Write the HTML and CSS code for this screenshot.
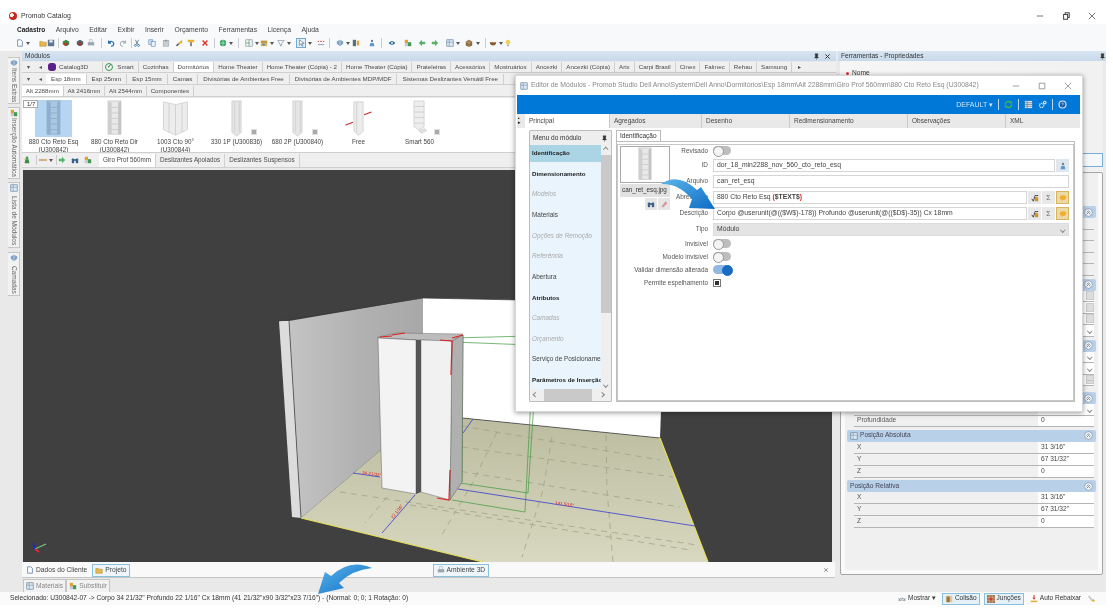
FILE: index.html
```html
<!DOCTYPE html>
<html lang="pt">
<head>
<meta charset="utf-8">
<title>Promob Catalog</title>
<link rel="stylesheet" href="styles.css">
</head>
<body>
<svg class="defs" aria-hidden="true">
  <defs>
    <symbol id="doc" viewBox="0 0 10 10"><path d="M2 1h4l2 2v6H2z" fill="#fff" stroke="#5a7fa8"/></symbol>
    <symbol id="open" viewBox="0 0 10 10"><path d="M1 3h3l1 1h4v5H1z" fill="#e8b84a" stroke="#a97f20" stroke-width=".6"/></symbol>
    <symbol id="save" viewBox="0 0 10 10"><rect x="1" y="1" width="8" height="8" fill="#5b7696"/><rect x="3" y="1.5" width="4" height="3" fill="#e6edf5"/></symbol>
    <symbol id="cube-g" viewBox="0 0 10 10"><path d="M1 3l4-2 4 2v4l-4 2-4-2z" fill="#3f8a45"/><path d="M2 5h5v3H3z" fill="#b03a30"/></symbol>
    <symbol id="cube-d" viewBox="0 0 10 10"><path d="M1 3l4-2 4 2v4l-4 2-4-2z" fill="#55606a"/><path d="M3 5h4v3H3z" fill="#a33"/></symbol>
    <symbol id="print" viewBox="0 0 10 10"><rect x="1" y="4" width="8" height="4" fill="#9aa5ae"/><rect x="3" y="1" width="4" height="3" fill="#eef1f4" stroke="#8a98a5" stroke-width=".5"/></symbol>
    <symbol id="undo" viewBox="0 0 10 10"><path d="M2 2v3h3M2.5 5A3 3 0 1 1 5 9" fill="none" stroke="#2a6eb4" stroke-width="1.6"/></symbol>
    <symbol id="redo" viewBox="0 0 10 10"><path d="M8 2v3H5M7.5 5A3 3 0 1 0 5 9" fill="none" stroke="#a5aeb6" stroke-width="1.4"/></symbol>
    <symbol id="cut" viewBox="0 0 10 10"><path d="M3 1l3 6M7 1L4 7" stroke="#5a6d80" stroke-width="1"/><circle cx="3" cy="8" r="1.2" fill="none" stroke="#3c6fa8"/><circle cx="7" cy="8" r="1.2" fill="none" stroke="#3c6fa8"/></symbol>
    <symbol id="copy" viewBox="0 0 10 10"><rect x="1" y="1" width="5" height="6" fill="#cfe3f5" stroke="#4d82b8" stroke-width=".7"/><rect x="4" y="3" width="5" height="6" fill="#e9f3fb" stroke="#4d82b8" stroke-width=".7"/></symbol>
    <symbol id="paste" viewBox="0 0 10 10"><rect x="1.5" y="2" width="7" height="7" fill="#c9ced3" stroke="#8d969e" stroke-width=".6"/><rect x="3.5" y="1" width="3" height="2" fill="#8d969e"/></symbol>
    <symbol id="brush" viewBox="0 0 10 10"><path d="M9 1L4 5l1 2 4-2z" fill="#e8b32d"/><path d="M1 8l3-3 1 2-2 2z" fill="#56616c"/></symbol>
    <symbol id="paint" viewBox="0 0 10 10"><rect x="1" y="1" width="8" height="3" fill="#efb02e"/><rect x="4" y="4" width="2" height="5" fill="#6d6d6d"/></symbol>
    <symbol id="del" viewBox="0 0 10 10"><path d="M2 2l6 6M8 2L2 8" stroke="#e0352b" stroke-width="1.8"/></symbol>
    <symbol id="globe" viewBox="0 0 10 10"><circle cx="5" cy="5" r="4" fill="#33a35e"/><path d="M1.5 5h7M5 1v8" stroke="#d3f0de" stroke-width=".8"/></symbol>
    <symbol id="plan" viewBox="0 0 10 10"><rect x="1" y="1" width="8" height="8" fill="#f0f3f5" stroke="#6e8294" stroke-width=".7"/><path d="M1 5h5M5 1v8" stroke="#3f8a45" stroke-width=".7"/></symbol>
    <symbol id="wall" viewBox="0 0 10 10"><rect x="1" y="2" width="8" height="3" fill="#c69a3c"/><rect x="1" y="5" width="8" height="4" fill="#d9b765"/><rect x="3" y="6" width="3" height="2" fill="#4c87c0"/></symbol>
    <symbol id="shape" viewBox="0 0 10 10"><path d="M1 2h8L6 5l-1 4-2-4z" fill="#fff" stroke="#5c7086" stroke-width=".7"/></symbol>
    <symbol id="sel" viewBox="0 0 10 10"><path d="M3 1v7l2-2 1.500 3 1-.5L6 5.500h3z" fill="#fff" stroke="#4a5a6a" stroke-width=".7"/></symbol>
    <symbol id="dims" viewBox="0 0 10 10"><path d="M1 7h8" stroke="#7c8ea0"/><path d="M1 3h1.500M4 3h2M7.500 3H9" stroke="#c0392b" stroke-width="1.200"/></symbol>
    <symbol id="gem" viewBox="0 0 10 10"><path d="M5 1l4 2v3L5 9 1 6V3z" fill="#7fa3c7"/><path d="M5 1v8" stroke="#dfe9f3" stroke-width=".7"/></symbol>
    <symbol id="blocks" viewBox="0 0 10 10"><rect x="1" y="1" width="4" height="8" fill="#55707f"/><rect x="6" y="2" width="3" height="6" fill="#d9a83a"/></symbol>
    <symbol id="figure" viewBox="0 0 10 10"><circle cx="5" cy="2.500" r="1.500" fill="#6d7f8f"/><path d="M2 9l1-4h4l1 4z" fill="#5c97cc"/></symbol>
    <symbol id="eye" viewBox="0 0 10 10"><path d="M1 5c2-3 6-3 8 0-2 3-6 3-8 0z" fill="#27698f"/><circle cx="5" cy="5" r="1.300" fill="#eaf3f9"/></symbol>
    <symbol id="mix" viewBox="0 0 10 10"><rect x="1" y="1" width="4" height="4" fill="#e29f2e"/><rect x="5" y="4" width="4" height="5" fill="#3f9a55"/><rect x="1" y="5" width="4" height="4" fill="#c4c9ce"/></symbol>
    <symbol id="arrow-l" viewBox="0 0 10 10"><path d="M1 5l4-4v2.500h4v3H5V9z" fill="#55b46a"/></symbol>
    <symbol id="arrow-r" viewBox="0 0 10 10"><path d="M9 5L5 1v2.500H1v3h4V9z" fill="#55b46a"/></symbol>
    <symbol id="frame" viewBox="0 0 10 10"><rect x="1" y="1" width="8" height="8" fill="#dce9f4" stroke="#5f7f9c" stroke-width=".8"/><path d="M4 1v8M1 4h8" stroke="#5f7f9c" stroke-width=".6"/></symbol>
    <symbol id="crate" viewBox="0 0 10 10"><path d="M1 3l4-2 4 2v5l-4 2-4-2z" fill="#8a6b3d"/><path d="M5 1v9M1 3l4 2 4-2" stroke="#d9c59e" stroke-width=".6" fill="none"/></symbol>
    <symbol id="bowl" viewBox="0 0 10 10"><path d="M1 4h8c0 3-2 4-4 4s-4-1-4-4z" fill="#8c5a2e"/></symbol>
    <symbol id="bulb" viewBox="0 0 10 10"><circle cx="5" cy="4" r="3" fill="#ecd35a"/><rect x="4" y="7" width="2" height="2" fill="#99a"/></symbol>
    <symbol id="binoc" viewBox="0 0 10 10"><rect x="1" y="3" width="3" height="6" rx="1" fill="#3a5f8c"/><rect x="6" y="3" width="3" height="6" rx="1" fill="#3a5f8c"/><rect x="3" y="4" width="4" height="2" fill="#3a5f8c"/></symbol>
    <symbol id="person" viewBox="0 0 10 10"><circle cx="5" cy="2.500" r="1.800" fill="#4f9b57"/><path d="M2 9l1-5h4l1 5z" fill="#3e8a46"/><path d="M1 3l2 2" stroke="#e2b93b"/></symbol>
    <symbol id="cab" viewBox="0 0 30 40"><path d="M8 1h14v36H8z" fill="#e8e8e8" stroke="#b5b5b5" stroke-width=".6"/><path d="M8 1l4 2v34l-4-0z" fill="#cfcfcf"/><path d="M22 1l-3 2v34l3 0z" fill="#c4c4c4"/><path d="M12 8h7M12 14h7M12 20h7M12 26h7M12 32h7" stroke="#b8b8b8" stroke-width=".6"/></symbol>
    <symbol id="cab-sel" viewBox="0 0 30 40"><path d="M8 1h14v36H8z" fill="#a9c8e4" stroke="#7e9fbe" stroke-width=".6"/><path d="M8 1l4 2v34l-4-0zM22 1l-3 2v34l3 0z" fill="#8db0d0"/><path d="M12 8h7M12 14h7M12 20h7M12 26h7M12 32h7" stroke="#7f9fbc" stroke-width=".6"/></symbol>
    <symbol id="corner" viewBox="0 0 30 40"><path d="M2 2l13 3 13-3v30l-13 6-13-6z" fill="#ececec" stroke="#bdbdbd" stroke-width=".6"/><path d="M15 5v33M8 4v31M22 4v31" stroke="#c9c9c9" stroke-width=".8"/></symbol>
    <symbol id="narrow" viewBox="0 0 30 40"><path d="M10 1h10v34l-5 4-5-4z" fill="#e6e6e6" stroke="#bdbdbd" stroke-width=".6"/><path d="M13 2v33M18 2v33" stroke="#cfcfcf"/></symbol>
    <symbol id="free" viewBox="0 0 30 40"><path d="M10 2h10v32l-5 4-5-4z" fill="#ececec" stroke="#bdbdbd" stroke-width=".6"/><path d="M13 3v32" stroke="#cfcfcf"/><path d="M1 27l8-3M21 16l8-3" stroke="#c72a2a" stroke-width="1.200"/></symbol>
    <symbol id="smart" viewBox="0 0 30 40"><path d="M9 1h11v28l-6 3-5-3z" fill="#eee" stroke="#bdbdbd" stroke-width=".6"/><path d="M9 7h11M9 13h11M9 19h11M9 25h11" stroke="#c2c2c2" stroke-width=".7"/><path d="M14 33l6-2 3 2-6 3z" fill="#e2e2e2" stroke="#bbb" stroke-width=".5"/></symbol>
    <symbol id="fx" viewBox="0 0 10 10"><path d="M1 6l2 3 2-7h4" fill="none" stroke="#333" stroke-width="1.100"/><rect x="5" y="4" width="4" height="5" fill="#d6931c"/></symbol>
    <symbol id="bubble" viewBox="0 0 10 10"><ellipse cx="5" cy="4.500" rx="4" ry="3" fill="#f3ae2c"/><path d="M3 7l0 2 2-2z" fill="#f3ae2c"/></symbol>
    <symbol id="pin" viewBox="0 0 10 10"><path d="M3 1h4v1l-.5 3 1 1v1H2.500V6l1-1L3 2zM5 7v3" fill="#333" stroke="#333" stroke-width=".5"/></symbol>
    <symbol id="up2" viewBox="0 0 10 10"><circle cx="5" cy="5" r="4.300" fill="#f5f8fb" stroke="#6f88a2" stroke-width=".7"/><path d="M3 5l2-2 2 2M3 7l2-2 2 2" fill="none" stroke="#3a4f66" stroke-width=".7"/></symbol>
    <symbol id="refresh" viewBox="0 0 10 10"><path d="M1.500 5a3.500 3.500 0 0 1 6-2.300M8.500 5a3.500 3.500 0 0 1-6 2.300" fill="none" stroke="#44b649" stroke-width="1.500"/><path d="M9 1v3H6zM1 9V6h3z" fill="#44b649"/></symbol>
    <symbol id="sheet" viewBox="0 0 10 10"><rect x="1" y="1" width="8" height="8" fill="#dfe7ee"/><path d="M3.500 1v8M1 3h8M1 5h8M1 7h8" stroke="#546b80" stroke-width=".7"/></symbol>
    <symbol id="gears" viewBox="0 0 10 10"><circle cx="4" cy="6" r="2.300" fill="none" stroke="#d6e5f2" stroke-width="1.400" stroke-dasharray="1.200 .6"/><circle cx="7.500" cy="2.800" r="1.500" fill="none" stroke="#d6e5f2" stroke-width="1.200"/></symbol>
    <symbol id="help" viewBox="0 0 10 10"><circle cx="5" cy="5" r="4.500" fill="#d5e5f3"/><circle cx="5" cy="5" r="3.200" fill="#1f5fa8"/><path d="M4 4.200c.3-1 2-1 2 0 0 .8-1 .8-1 1.600" fill="none" stroke="#dcebf7" stroke-width=".7"/></symbol>
    <symbol id="show" viewBox="0 0 10 10"><path d="M1 7c2-4 6-4 8 0M1 4l1 3 3-1M9 4L8 7 5 6" fill="none" stroke="#5d6d7c" stroke-width=".8"/></symbol>
    <symbol id="door" viewBox="0 0 10 10"><rect x="1" y="1" width="8" height="8" fill="#d9c8a4"/><rect x="2" y="2" width="4" height="7" fill="#a5733a"/></symbol>
    <symbol id="joint" viewBox="0 0 10 10"><rect x="0" y="0" width="10" height="10" fill="#a67b52"/><path d="M0 3.300h10M0 6.600h10M3.300 0v10M6.600 0v10" stroke="#d9c3a5" stroke-width=".6"/><circle cx="5" cy="5" r="2" fill="#e22f2f"/></symbol>
    <symbol id="lower" viewBox="0 0 10 10"><path d="M5 0v4" stroke="#d8382c" stroke-width="1.400"/><path d="M3 3.500h4L5 6z" fill="#d8382c"/><rect x="1" y="7" width="8" height="2" fill="#e2b13a"/></symbol>
    <symbol id="wrench" viewBox="0 0 10 10"><path d="M1 1.500l2-1 5 6-2 2z" fill="#c9cdd1"/><path d="M6 7l2-2 2 2-1.500 2z" fill="#e4b636"/></symbol>
  </defs>
</svg>

<div class="app">
  <header class="titlebar">
    <span class="appicon"></span>
    <span class="apptitle">Promob Catalog</span>
    <span class="wincontrols">
      <svg class="wc" viewBox="0 0 10 10"><path d="M1 5h8" stroke="#555"/></svg>
      <svg class="wc" viewBox="0 0 10 10"><path d="M2 3h5v6H2zM4 3V1h5v6H7" fill="none" stroke="#444" stroke-width="1.300"/></svg>
      <svg class="wc" viewBox="0 0 10 10"><path d="M1 1l8 8M9 1L1 9" stroke="#555"/></svg>
    </span>
  </header>

  <nav class="menubar">
    <b>Cadastro</b><span>Arquivo</span><span>Editar</span><span>Exibir</span><span>Inserir</span><span>Orçamento</span><span>Ferramentas</span><span>Licença</span><span>Ajuda</span>
  </nav>

  <div class="toolbar">
    <svg class="ti ml0"><use href="#doc"/></svg><i class="dr ml2"></i>
    <svg class="ti ml9"><use href="#open"/></svg><svg class="ti"><use href="#save"/></svg><i class="sp ml3"></i>
    <svg class="ti ml3"><use href="#cube-g"/></svg><svg class="ti ml6"><use href="#cube-d"/></svg><svg class="ti ml3"><use href="#print"/></svg><i class="sp ml6"></i>
    <svg class="ti ml5"><use href="#undo"/></svg><svg class="ti ml4"><use href="#redo"/></svg><i class="sp ml4"></i>
    <svg class="ti ml1"><use href="#cut"/></svg><svg class="ti ml7"><use href="#copy"/></svg><svg class="ti ml6"><use href="#paste"/></svg><svg class="ti ml5"><use href="#brush"/></svg><svg class="ti ml4"><use href="#paint"/></svg><svg class="ti ml6"><use href="#del"/></svg><i class="sp ml5"></i>
    <svg class="ti ml4"><use href="#globe"/></svg><i class="dr ml2"></i><i class="sp ml5"></i>
    <svg class="ti ml6"><use href="#plan"/></svg><i class="dr ml2"></i>
    <svg class="ti ml1"><use href="#wall"/></svg><i class="dr ml2"></i>
    <svg class="ti ml3"><use href="#shape"/></svg><i class="dr ml2"></i>
    <svg class="ti ml6 on"><use href="#sel"/></svg><i class="dr ml3"></i>
    <svg class="ti ml5"><use href="#dims"/></svg><i class="sp ml4"></i>
    <svg class="ti ml6"><use href="#gem"/></svg><i class="dr ml2"></i>
    <svg class="ti ml2"><use href="#blocks"/></svg><svg class="ti ml8"><use href="#figure"/></svg><i class="sp ml5"></i>
    <svg class="ti ml6"><use href="#eye"/></svg><svg class="ti ml8"><use href="#mix"/></svg><svg class="ti ml6"><use href="#arrow-l"/></svg><svg class="ti ml5"><use href="#arrow-r"/></svg>
    <svg class="ti ml7"><use href="#frame"/></svg><i class="dr ml2"></i>
    <svg class="ti ml5"><use href="#crate"/></svg><i class="dr ml3"></i><i class="sp ml5"></i>
    <svg class="ti ml3"><use href="#bowl"/></svg><i class="dr ml2"></i>
    <svg class="ti ml1"><use href="#bulb"/></svg>
  </div>

  <div class="workspace">
    <aside class="rail">
      <div class="vtab"><svg class="vi"><use href="#gem"/></svg><span>Itens Extras</span></div>
      <div class="vtab"><svg class="vi"><use href="#mix"/></svg><span>Inserção Automática</span></div>
      <div class="vtab"><svg class="vi"><use href="#frame"/></svg><span>Lista de Módulos</span></div>
      <div class="vtab"><svg class="vi"><use href="#gem"/></svg><span>Camadas</span></div>
    </aside>

    <section class="center">
      <div class="phead"><span>Módulos</span><svg class="hi"><use href="#pin"/></svg><svg class="hx" viewBox="0 0 10 10"><path d="M2 2l6 6M8 2L2 8" stroke="#333" stroke-width="1.400"/></svg></div>

      <div class="tabrow r1">
        <span class="nav">▾</span><span class="nav">◂</span>
        <span class="tab cat"><span class="hexi"></span>Catalog3D</span>
        <span class="tab smart"><span class="check">✓</span>Smart</span>
        <span class="tab">Cozinhas</span>
        <span class="tab active">Dormitórios</span>
        <span class="tab">Home Theater</span>
        <span class="tab">Home Theater (Cópia) - 2</span>
        <span class="tab">Home Theater (Cópia)</span>
        <span class="tab">Prateleiras</span>
        <span class="tab">Acessórios</span>
        <span class="tab">Mostruários</span>
        <span class="tab">Ancezki</span>
        <span class="tab">Ancezki (Cópia)</span>
        <span class="tab">Arix</span>
        <span class="tab">Carpi Brasil</span>
        <span class="tab">Cinex</span>
        <span class="tab">Falmec</span>
        <span class="tab">Rehau</span>
        <span class="tab">Samsung</span>
        <span class="tab more">▸</span>
      </div>

      <div class="tabrow r2">
        <span class="nav">▾</span><span class="nav">◂</span>
        <span class="tab active">Esp 18mm</span>
        <span class="tab">Esp 25mm</span>
        <span class="tab">Esp 15mm</span>
        <span class="tab">Camas</span>
        <span class="tab">Divisórias de Ambientes Free</span>
        <span class="tab">Divisórias de Ambientes MDP/MDF</span>
        <span class="tab">Sistemas Deslizantes Versátil Free</span>
      </div>

      <div class="tabrow r3">
        <span class="tab active">Alt 2288mm</span>
        <span class="tab">Alt 2416mm</span>
        <span class="tab">Alt 2544mm</span>
        <span class="tab">Componentes</span>
      </div>

      <div class="catalog">
        <span class="pager">1/7</span>
        <figure class="item sel"><svg class="thumb"><use href="#cab-sel"/></svg><figcaption>880 Cto Reto Esq (U300842)</figcaption></figure>
        <figure class="item"><svg class="thumb"><use href="#cab"/></svg><figcaption>880 Cto Reto Dir (U300842)</figcaption></figure>
        <figure class="item"><svg class="thumb"><use href="#corner"/></svg><figcaption>1003 Cto 90° (U300844)</figcaption></figure>
        <figure class="item badge"><svg class="thumb"><use href="#narrow"/></svg><figcaption>330 1P (U300836)</figcaption></figure>
        <figure class="item badge"><svg class="thumb"><use href="#narrow"/></svg><figcaption>680 2P (U300840)</figcaption></figure>
        <figure class="item"><svg class="thumb"><use href="#free"/></svg><figcaption>Free</figcaption></figure>
        <figure class="item badge"><svg class="thumb"><use href="#smart"/></svg><figcaption>Smart 560</figcaption></figure>
      </div>

      <div class="tool2">
        <svg class="ti ml1"><use href="#person"/></svg><i class="sp ml5"></i>
        <svg class="ti ml2" viewBox="0 0 10 10"><path d="M0 5h10" stroke="#c08a3a" stroke-width="1.500"/></svg><i class="dr ml2"></i><i class="sp ml3"></i>
        <svg class="ti ml1"><use href="#arrow-r"/></svg>
        <svg class="ti ml5"><use href="#binoc"/></svg>
        <svg class="ti ml5"><use href="#mix"/></svg>
        <span class="tab active ml7">Giro Prof 560mm</span>
        <span class="tab">Deslizantes Apoiados</span>
        <span class="tab">Deslizantes Suspensos</span>
      </div>

      <div class="viewport">
        <svg class="scene" viewBox="23 170 809 392">
          <defs>
            <linearGradient id="wallg" x1="0" y1="0" x2="1" y2="0"><stop offset="0" stop-color="#c4c4c4"/><stop offset=".5" stop-color="#b2b2b2"/><stop offset="1" stop-color="#a8a8a8"/></linearGradient>
            <linearGradient id="floorg" x1="0" y1="0" x2="0" y2="1"><stop offset="0" stop-color="#bbbb9f"/><stop offset="1" stop-color="#d8d8c0"/></linearGradient>
          </defs>
          <polygon points="423,298 665,303 660,438 423,414" fill="#fff"/>
          <polygon points="423,414 660,438 708,562 483,562 301,518" fill="url(#floorg)"/>
          <polygon points="289,321 423,298 423,414 301,518" fill="url(#wallg)"/>
          <polygon points="279,321 289,321 301,518 292,517" fill="#dcdcdc"/>
          <path d="M279 321L423 298L665 303M289 321L301 518M660 438L423 414" fill="none" stroke="#3a3a3a" stroke-width=".7"/>
          <path d="M301 518L483 562M660 438L708 562" stroke="#e7df58" stroke-width="1.200" fill="none"/>
          <g class="grid">
            <path d="M462 426L660 460M462 447L673 477M440 468L680 507M340 492L697 545M410 505L690 550"/>
            <path d="M552 437L543 490L522 557M606 435L607 490L613 562M497 432L473 482L440 538M387 497L365 523"/>
          </g>
          <g class="green">
            <path d="M453 338L530 336M453 342L530 345M452 500L525 512M460 483L528 493M525 512L534 340M528 493L538 340M463 335L462 482M452 341L450 500"/>
          </g>
          <polygon points="452,341 463,335 462,482 450,500" fill="#b0b0b0" stroke="#444" stroke-width=".4"/>
          <polygon points="378,337 397,333 463,334 452,341 421,340 378,338" fill="#bcbcbc" stroke="#555" stroke-width=".4"/>
          <polygon points="421,340 452,341 450,500 421,492" fill="#f1f1f1" stroke="#555" stroke-width=".4"/>
          <polygon points="416,340 421,340 421,492 416,494" fill="#555"/>
          <polygon points="378,338 416,340 416,494 382,488" fill="#f3f3f3" stroke="#444" stroke-width=".4"/>
          <g class="blue">
            <path d="M353 473L380 477M415 495L382 533M458 489L695 526M473 419L463 433"/>
          </g>
          <g class="red">
            <path d="M380 337L392 336M392 335L405 333M440 340L452 341L451 375M450 470L449 500L437 498M452 338L463 335"/>
          </g>
          <text class="dim" transform="translate(362 474) rotate(8)">34 21/32"</text>
          <text class="dim" transform="translate(393 519) rotate(-52)">22 1/16"</text>
          <text class="dim" transform="translate(555 504) rotate(9)">141 5/16"</text>
          <g class="gizmo">
            <path d="M35 549L33 543" stroke="#2222dd" stroke-width="1.500"/>
            <path d="M35 549L46 544" stroke="#7cc47c" stroke-width="1.300"/>
            <path d="M35 549L39 552" stroke="#d92b2b" stroke-width="2"/>
          </g>
        </svg>
      </div>

      <div class="docbar">
        <span class="doc"><svg class="ti"><use href="#doc"/></svg>Dados do Cliente</span>
        <span class="doc on"><svg class="ti"><use href="#open"/></svg>Projeto</span>
        <span class="doc on amb"><svg class="ti"><use href="#print"/></svg>Ambiente 3D</span>
        <svg class="close" viewBox="0 0 10 10"><path d="M2 2l6 6M8 2L2 8" stroke="#888" stroke-width="1.500"/></svg>
      </div>
      <div class="bottabs">
        <span class="btab"><svg class="ti"><use href="#frame"/></svg>Materiais</span>
        <span class="btab"><svg class="ti"><use href="#mix"/></svg>Substituir</span>
      </div>
    </section>

    <aside class="right">
      <div class="phead"><span>Ferramentas - Propriedades</span><svg class="hi"><use href="#pin"/></svg></div>
      <div class="rtop">
        <div class="namerow"><i class="reddot"></i>Nome</div>
        <div class="inputbox"></div>
      </div>
      <div class="props">
        <div class="inner">
          <div class="sec first"><div class="sech"><svg class="up"><use href="#up2"/></svg></div>
            <div class="row"></div><div class="row"></div><div class="row"></div><div class="row"></div><div class="row"></div></div>
          <div class="sec"><div class="sech"><svg class="up"><use href="#up2"/></svg></div>
            <div class="row"><em class="v"><b class="mini"></b></em></div><div class="row"><em class="v"><b class="mini"></b></em></div><div class="row"><em class="v"><b class="mini"></b></em></div><div class="row"><em class="v chev"><i class="chv"></i></em></div></div>
          <div class="sec"><div class="sech"><svg class="up"><use href="#up2"/></svg></div>
            <div class="row"><em class="v chev"><i class="chv"></i></em></div><div class="row"><em class="v chev"><i class="chv"></i></em></div><div class="row"><em class="v"><b class="mini">…</b></em></div></div>
          <div class="sec gap"><div class="sech"><svg class="up"><use href="#up2"/></svg></div>
            <div class="row"><em class="v chev"><i class="chv"></i></em></div><div class="row"><span>Profundidade</span><em class="v">0</em></div></div>
          <div class="sec tall"><div class="sech"><svg class="si"><use href="#frame"/></svg><span>Posição Absoluta</span><svg class="up"><use href="#up2"/></svg></div>
            <div class="row"><span>X</span><em class="v">31 3/16"</em></div><div class="row"><span>Y</span><em class="v">67 31/32"</em></div><div class="row"><span>Z</span><em class="v">0</em></div></div>
          <div class="sec tall"><div class="sech"><span>Posição Relativa</span><svg class="up"><use href="#up2"/></svg></div>
            <div class="row"><span>X</span><em class="v">31 3/16"</em></div><div class="row"><span>Y</span><em class="v">67 31/32"</em></div><div class="row"><span>Z</span><em class="v">0</em></div></div>
        </div>
      </div>
    </aside>
  </div>

  <footer class="status">
    <span class="sel-text">Selecionado: U300842-07 -&gt; Corpo 34 21/32" Profundo 22 1/16" Cx 18mm (41 21/32"x90 3/32"x23 7/16") - (Normal: 0; 0; 1 Rotação: 0)</span>
    <span class="stat">
      <span class="sitem"><svg class="ti"><use href="#show"/></svg>Mostrar ▾</span>
      <span class="sitem on"><svg class="ti"><use href="#door"/></svg>Colisão</span>
      <span class="sitem on"><svg class="ti"><use href="#joint"/></svg>Junções</span>
      <span class="sitem"><svg class="ti"><use href="#lower"/></svg>Auto Rebaixar</span>
      <svg class="ti"><use href="#wrench"/></svg>
    </span>
  </footer>

  <div class="dialog">
    <div class="dtitle">
      <svg class="ti"><use href="#frame"/></svg>
      <span>Editor de Módulos - Promob Studio Dell Anno\System\Dell Anno\Dormitórios\Esp 18mm\Alt 2288mm\Giro Prof 560mm\880 Cto Reto Esq (U300842)</span>
      <span class="dctl">
        <svg class="wc" viewBox="0 0 10 10"><path d="M1 5h8" stroke="#888"/></svg>
        <svg class="wc" viewBox="0 0 10 10"><path d="M1.500 1.500h7v7h-7z" fill="none" stroke="#888"/></svg>
        <svg class="wc" viewBox="0 0 10 10"><path d="M1 1l8 8M9 1L1 9" stroke="#888"/></svg>
      </span>
    </div>
    <div class="dblue">
      <span>DEFAULT ▾</span><i class="bs"></i>
      <svg class="bi"><use href="#refresh"/></svg><i class="bs"></i>
      <svg class="bi"><use href="#sheet"/></svg><svg class="bi"><use href="#gears"/></svg><i class="bs"></i>
      <svg class="bi"><use href="#help"/></svg>
    </div>
    <div class="dtabs">
      <span class="dmark">▪<br>▸</span>
      <span class="dt d1 active">Principal</span>
      <span class="dt d2">Agregados</span>
      <span class="dt d3">Desenho</span>
      <span class="dt d4">Redimensionamento</span>
      <span class="dt d5">Observações</span>
      <span class="dt d6">XML</span>
    </div>
    <div class="dbody">
      <div class="mmenu">
        <div class="mhead"><span>Menu do módulo</span><svg class="hi"><use href="#pin"/></svg></div>
        <div class="mlist">
          <ul>
            <li class="cur">Identificação</li>
            <li class="b">Dimensionamento</li>
            <li class="off">Modelos</li>
            <li>Materiais</li>
            <li class="off">Opções de Remoção</li>
            <li class="off">Referência</li>
            <li>Abertura</li>
            <li class="b">Atributos</li>
            <li class="off">Camadas</li>
            <li class="off">Orçamento</li>
            <li>Serviço de Posicionamento</li>
            <li class="b">Parâmetros de Inserção</li>
          </ul>
          <div class="vs"><i class="chv up1"></i><i class="bar"></i><i class="chv"></i></div>
        </div>
        <div class="hs"><i class="chv lf"></i><i class="bar"></i><i class="chv rt"></i></div>
      </div>
      <div class="idpane">
        <span class="idtab">Identificação</span>
        <div class="idbox">
          <div class="form">
            <div class="thumbcol">
              <div class="bigthumb"><svg class="bt"><use href="#cab"/></svg></div>
              <div class="fname">can_ret_esq.jpg</div>
              <div class="tbtns"><span class="tbtn"><svg class="ti"><use href="#binoc"/></svg></span><span class="tbtn"><svg class="ti" viewBox="0 0 10 10"><path d="M2 8l5-6 2 2-5 5z" fill="#e88" stroke="#bbb" stroke-width=".5"/></svg></span></div>
            </div>
            <label class="lb l1">Revisado</label><div class="f"><i class="tg"></i></div>
            <label class="lb">ID</label><div class="f"><span class="in">dor_18_min2288_nov_560_cto_reto_esq</span><span class="btn1"><svg class="ti"><use href="#figure"/></svg></span></div>
            <label class="lb">Arquivo</label><div class="f"><span class="in">can_ret_esq</span></div>
            <label class="lb">Abreviação</label><div class="f"><span class="in">880 Cto Reto Esq <b class="rd">(</b><b>$TEXT$</b><b class="rd">)</b></span><span class="btn3"><svg class="ti"><use href="#fx"/></svg></span><span class="btn3 sig">Σ</span><span class="btn3 or"><svg class="ti"><use href="#bubble"/></svg></span></div>
            <label class="lb">Descrição</label><div class="f"><span class="in">Corpo @userunit(@(($W$)-178)) Profundo @userunit(@(($D$)-35)) Cx 18mm</span><span class="btn3"><svg class="ti"><use href="#fx"/></svg></span><span class="btn3 sig">Σ</span><span class="btn3 or"><svg class="ti"><use href="#bubble"/></svg></span></div>
            <label class="lb">Tipo</label><div class="f"><span class="in sel">Módulo<i class="chv"></i></span></div>
            <label class="lb wide">Invisível</label><div class="f"><i class="tg"></i></div>
            <label class="lb wide">Modelo invisível</label><div class="f"><i class="tg"></i></div>
            <label class="lb wide">Validar dimensão alterada</label><div class="f"><i class="tg on"></i></div>
            <label class="lb wide">Permite espelhamento</label><div class="f"><i class="cb"></i></div>
          </div>
        </div>
      </div>
    </div>
  </div>

  <svg class="arrows" viewBox="0 0 1113 614" aria-hidden="true">
    <defs><linearGradient id="ag" x1="0" y1="0" x2="1" y2="1"><stop offset="0" stop-color="#5ab4ea"/><stop offset="1" stop-color="#0d6cc4"/></linearGradient></defs>
    <path d="M661 184Q678 172 697 190L701 187L715 209L689 208L692 199Q678 183 661 184Z" fill="url(#ag)"/>
    <path d="M372 568Q350 558 331 576L325 572L318 594L344 588L339 583Q352 570 372 568Z" fill="url(#ag)"/>
  </svg>
</div>
</body>
</html>
```

FILE: styles.css
```css
* { box-sizing: border-box; }
html, body { margin: 0; padding: 0; background: #fff; }
body { font: 6.6px/1 "Liberation Sans", Arial, sans-serif; color: #333; overflow: hidden; }
.defs { position: absolute; width: 0; height: 0; }
i, em { font-style: normal; }

.app { position: relative; width: 1113px; height: 614px; display: flex; flex-direction: column; background: #fff; filter: blur(.45px); overflow: hidden; }

/* Title, menu, toolbar */
.titlebar { height: 24px; display: flex; align-items: center; padding: 8px 0 0 9px; flex: none; font-size: 6.900px; }
.appicon { width: 8px; height: 8px; border-radius: 50%; background: radial-gradient(circle at 35% 40%, #f3f3f3 0 25%, #c8281e 30%); margin-right: 4px; }
.wincontrols { margin-left: auto; display: flex; gap: 18px; margin-right: 17px; }
.wc { width: 8px; height: 8px; }

.menubar { height: 13px; width: 1106px; background: #f8f9fa; display: flex; align-items: center; gap: 10.500px; padding-left: 17px; flex: none; font-size: 6.800px; color: #444; }
.menubar b { color: #222; font-size: 6.500px; }

.toolbar { height: 14px; width: 1106px; background: #f8f9fa; display: flex; align-items: center; padding: 0 0 2px 16px; flex: none; }
.ti { width: 8px; height: 8px; flex: none; display: block; }
.dr { width: 0; height: 0; border: 2.500px solid transparent; border-top: 3px solid #555; border-bottom: 0; flex: none; box-sizing: content-box; }
.sp { width: 1px; height: 10px; background: #c8cdd2; flex: none; }
.ti.on { outline: 1px solid #6ea9d8; background: #e3f0fa; }
.ml0 { margin-left: 0; } .ml1 { margin-left: 1px; } .ml2 { margin-left: 2px; } .ml3 { margin-left: 3px; } .ml4 { margin-left: 4px; }
.ml5 { margin-left: 5px; } .ml6 { margin-left: 6px; } .ml7 { margin-left: 7px; } .ml8 { margin-left: 8px; } .ml9 { margin-left: 9px; }

/* Workspace */
.workspace { height: 541px; width: 1106px; display: flex; flex: none; background: #e9e9e9; }
.rail { width: 22px; flex: none; padding: 6px 0 0 8px; display: flex; flex-direction: column; gap: 3px; }
.vtab { width: 12px; background: #f2f2f2; border: 1px solid #c5c5c5; border-left: 0; display: flex; flex-direction: column; align-items: center; padding: 1px 0; gap: 1px; color: #666; font-size: 6.500px; }
.vtab:nth-child(3) { height: 66px; }
.vtab:nth-child(4) { height: 44px; margin-top: 1px; }
.vtab:nth-child(3) span { margin-top: 3px; }
.vtab:nth-child(4) span { margin-top: 3px; }
.vtab span { writing-mode: vertical-rl; white-space: nowrap; }
.vi { width: 8px; height: 8px; flex: none; }

.center { width: 814px; flex: none; display: flex; flex-direction: column; }
.phead { height: 10px; background: linear-gradient(#d8e5f2, #c7d9ea); display: flex; align-items: center; padding-left: 3px; flex: none; color: #333; gap: 4px; font-size: 6.600px; }
.hi { width: 7px; height: 7px; margin-left: auto; }
.hx { width: 7px; height: 7px; margin-right: 5px; }

.tabrow { display: flex; align-items: stretch; flex: none; background: #efefef; border-bottom: 1px solid #cfcfcf; white-space: nowrap; overflow: hidden; font-size: 6.200px; }
.r1 { height: 11px; margin-top: 1px; }
.r2 { height: 12px; padding-top: 1px; }
.r3 { height: 12px; padding-top: 1px; }
.tab { display: flex; align-items: center; padding: 0 4px; border-right: 1px solid #d0d0d0; color: #4a4a4a; }
.tab.active { background: #fff; }
.r2 .tab { padding: 0 5px; }
.r3 .tab { padding: 0 3.800px; }
.nav { width: 12px; display: flex; align-items: center; justify-content: center; color: #555; font-size: 6px; }
.cat { padding-left: 2px; padding-right: 14px; gap: 3px; }
.hexi { width: 8px; height: 8px; background: #5b1f8a; border-radius: 3px; }
.smart { gap: 4px; padding-left: 2px; padding-right: 4px; }
.check { width: 8px; height: 8px; border: 1px solid #3c9a55; border-radius: 50%; color: #2e8b47; font-size: 5.500px; display: flex; align-items: center; justify-content: center; font-weight: bold; }
.more { border: 0; padding-left: 6px; }

.catalog { position: relative; height: 55px; background: #fff; display: flex; flex: none; overflow: hidden; padding-left: 1px; border-bottom: 1px solid #cfcfcf; margin-top: 1px; }
.pager { position: absolute; z-index: 1; left: 1px; top: 2px; width: 15px; height: 8px; border: 1px solid #aaa; background: #fff; font-size: 6px; line-height: 6px; padding-left: 3px; }
.item { position: relative; margin: 0; width: 61px; flex: none; padding-top: 2px; text-align: center; }
.thumb { width: 37px; height: 37px; display: block; margin: 0 auto; }
.item.sel .thumb { background: #b5d5f2; }
.item figcaption { font-size: 6.300px; line-height: 8px; margin-top: 1px; color: #444; }
.item.badge::after { content: ""; position: absolute; left: 45px; top: 31px; width: 4px; height: 4px; background: #aaa; border: 1px solid #ddd; }

.tool2 { height: 15px; display: flex; align-items: center; flex: none; background: #efefef; border-bottom: 1px solid #cfcfcf; font-size: 6.300px; margin-bottom: 2px; }
.tool2 .tab { height: 13px; }

.viewport { height: 392px; width: 809px; margin-left: 1px; background: #404040; flex: none; }
.scene { display: block; width: 809px; height: 392px; }
.grid path { fill: none; stroke: #9c9c84; stroke-width: .7; stroke-dasharray: 6 5; }
.green path { fill: none; stroke: #3d9a3d; stroke-width: .7; }
.blue path { fill: none; stroke: #3a3ad0; stroke-width: .8; }
.red path { fill: none; stroke: #e02020; stroke-width: 1.200; }
.dim { font: 4.500px "Liberation Sans", sans-serif; fill: #e02020; }

.docbar { height: 16px; width: 813px; background: #f9f9f9; border-bottom: 1px solid #c5c5c5; display: flex; align-items: center; padding: 1px 0 0 2px; flex: none; gap: 3px; font-size: 6.700px; color: #444; }
.doc { display: flex; align-items: center; gap: 2px; height: 13px; padding: 0 2px; }
.doc.on { border: 1px solid #8bbfdc; background: #eef6fb; }
.amb { margin-left: 300px; padding: 0 3px; }
.close { width: 6px; height: 6px; margin-left: auto; margin-right: 6px; }
.bottabs { height: 14px; display: flex; padding: 1px 0 0 1px; flex: none; font-size: 6.700px; color: #888; }
.btab { display: flex; align-items: center; gap: 2px; padding: 0 2px; border: 1px solid #c5c5c5; border-bottom: 0; background: #f2f2f2; }

/* Right panel */
.right { flex: 1; display: flex; flex-direction: column; margin-left: 2px; }
.rtop { height: 111px; flex: none; display: flex; flex-direction: column; background: linear-gradient(90deg, #f6f6f6, #f1f1f1); margin: 0 3px 0 2px; padding-top: 7px; }
.namerow { display: flex; align-items: center; gap: 3px; padding-left: 6px; font-size: 6.600px; height: 10px; }
.reddot { width: 3px; height: 3px; background: #d33; border-radius: 50%; }
.inputbox { margin-top: 75px; margin-left: 180px; height: 14px; border: 1px solid #79aed6; background: #f4f8fb; }
.props { height: 403px; flex: none; margin: 0 3px 0 2px; border: 1px solid #a5a5a5; border-radius: 2px; background: #fafafa; padding: 0 4px 4px; }
.inner { height: 100%; background: #f0f0f0; padding: 33px 2px 0 2px; }
.sec { margin-top: 3px; }
.sec.first { margin-top: 0; }
.sec.gap { margin-top: 6px; }
.sec.tall { margin-top: 2.500px; }
.sech { height: 12px; background: #b9d0e9; border-radius: 2px; display: flex; align-items: center; gap: 2px; padding: 0 3px; font-size: 6.600px; color: #445; }
.si { width: 8px; height: 8px; }
.up { width: 9px; height: 9px; margin-left: auto; }
.row { height: 11.500px; margin: 0 2px 0 7px; border-bottom: 1px solid #b5b5b5; display: flex; align-items: center; font-size: 6.600px; padding-left: 3px; color: #555; }
.tall .row { height: 12px; }
.v { margin-left: auto; width: 56px; height: 100%; background: #fff; padding-left: 3px; display: flex; align-items: center; color: #444; }
.chev { justify-content: flex-end; padding-right: 3px; }
.chv { display: block; flex: none; width: 3.500px; height: 3.500px; border-right: 1px solid #888; border-bottom: 1px solid #888; transform: rotate(45deg); }
.chv.up1 { transform: rotate(225deg); }
.chv.lf { transform: rotate(135deg); }
.chv.rt { transform: rotate(-45deg); }
.mini { margin-left: auto; width: 8px; height: 9px; background: #ddd; border: 1px solid #ccc; display: block; font-weight: normal; font-size: 6px; }

/* Status */
.status { height: 13px; width: 1106px; background: #fafafa; display: flex; align-items: center; padding-left: 10px; flex: none; font-size: 6.650px; color: #333; }
.stat { margin-left: auto; display: flex; align-items: center; gap: 4px; margin-right: 11px; font-size: 6.500px; }
.sitem { display: flex; align-items: center; gap: 2px; height: 12px; padding: 0 2px; }
.sitem.on { border: 1px solid #8bbfdc; background: #e4f1f9; }

/* Dialog */
.dialog { position: absolute; left: 515px; top: 75px; width: 568px; height: 337px; background: #fff; border: 1px solid #d8d8d8; box-shadow: 0 1px 5px rgba(0,0,0,.4); display: flex; flex-direction: column; }
.dtitle { height: 19px; display: flex; align-items: center; padding-left: 4px; gap: 3px; flex: none; color: #888; font-size: 6.850px; }
.dctl { margin-left: auto; display: flex; gap: 18px; margin-right: 10px; }
.dblue { height: 19px; margin: 0 2px 0 1px; background: #0078d7; flex: none; display: flex; align-items: center; justify-content: flex-end; gap: 5px; padding-right: 13px; color: #cfe4f6; font-size: 7px; }
.bs { width: 1px; height: 11px; background: #bcd8ef; }
.bi { width: 9px; height: 9px; }
.dtabs { height: 14px; margin: 0 2px 0 1px; background: #e9e9e9; flex: none; display: flex; align-items: stretch; font-size: 6.500px; color: #444; }
.dmark { width: 8px; font-size: 5px; line-height: 4px; color: #111; padding-top: 2px; padding-left: 1px; flex: none; }
.dt { display: flex; align-items: center; padding-left: 4px; border-right: 1px solid #c9c9c9; flex: none; }
.dt.active { background: #fff; }
.d1 { width: 85px; } .d2 { width: 92px; } .d3 { width: 88px; } .d4 { width: 118px; } .d5 { width: 98px; } .d6 { flex: 1; border: 0; }
.dbody { flex: 1; display: flex; padding: 2px 0 9px 13px; gap: 4px; min-height: 0; }

.mmenu { width: 83px; flex: none; border: 1px solid #bdbdbd; border-radius: 1px; display: flex; flex-direction: column; background: #eef0f2; overflow: hidden; }
.mhead { height: 14px; display: flex; align-items: center; padding: 0 3px; flex: none; font-size: 6.500px; background: #eee; }
.mlist { flex: 1; display: flex; min-height: 0; }
.mlist ul { list-style: none; margin: 0; padding: 0; flex: 1; background: #e9f4fd; overflow: hidden; min-width: 0; }
.mlist li { height: 17px; margin-bottom: 3.600px; display: flex; align-items: center; padding-left: 2px; white-space: nowrap; font-size: 6.400px; color: #444; }
.mlist li.cur { background: #abd5e4; font-weight: bold; color: #222; font-size: 6.200px; }
.mlist li.b { font-weight: bold; color: #222; font-size: 6.200px; }
.mlist li.off { font-style: italic; color: #aaa; }
.vs { width: 10px; flex: none; background: #efefef; display: flex; flex-direction: column; align-items: center; padding: 3px 0; }
.vs .bar { display: block; width: 10px; height: 158px; background: #c9c9c9; margin: 3px 0 auto; }
.hs { height: 12px; flex: none; background: #efefef; display: flex; align-items: center; padding: 0 4px; }
.hs .bar { display: block; width: 48px; height: 100%; background: #c9c9c9; margin: 0 8px 0 6px; }

.idpane { width: 459px; flex: none; display: flex; flex-direction: column; }
.idtab { align-self: flex-start; height: 11px; padding: 0 3px; display: flex; align-items: center; border: 1px solid #bbb; border-bottom: 0; font-size: 6.500px; }
.idbox { flex: 1; border: 1px solid #bdbdbd; padding: 2px 0 0 0; }
.form { border: 1px solid #c8c8c8; height: 100%; padding: 1px 4px 0 2px; display: grid; grid-template-columns: 50px 38px 1fr; row-gap: 3px; grid-auto-rows: max-content; }
.thumbcol { grid-column: 1; grid-row: 1 / 7; display: flex; flex-direction: column; }
.bigthumb { width: 50px; height: 37px; border: 1px solid #aaa; }
.bt { width: 48px; height: 35px; display: block; }
.fname { height: 13px; background: #e2e2e2; font-size: 6.300px; display: flex; align-items: center; overflow: hidden; white-space: nowrap; padding-left: 2px; margin-top: 1px; }
.tbtns { display: flex; justify-content: flex-end; gap: 1px; margin-top: 1px; }
.tbtn { width: 12px; height: 12px; background: #e6e6e6; display: flex; align-items: center; justify-content: center; }
.lb { grid-column: 2; white-space: nowrap; display: flex; align-items: center; justify-content: flex-end; font-size: 6.400px; color: #555; }
.lb.wide { grid-column: 1 / 3; }
.f { grid-column: 3; display: flex; margin-left: 5px; gap: 1px; min-height: 10px; align-items: stretch; }
.in { flex: 1; height: 13px; background: #fff; border: 1px solid #d5d5d5; display: flex; align-items: center; padding-left: 3px; font-size: 6.800px; white-space: pre; color: #444; }
.in b { font-weight: bold; }
.in .rd { color: #dd2020; }
.in.sel { background: #e4e4e4; border-color: #ddd; }
.in.sel .chv { margin-left: auto; margin-right: 4px; }
.btn1 { width: 13px; height: 13px; background: #dfe6ec; display: flex; align-items: center; justify-content: center; }
.btn3 { width: 13px; height: 13px; background: #e8e8e8; display: flex; align-items: center; justify-content: center; font-size: 7px; }
.btn3.or { background: #ecd9a8; border: 1px solid #d9b45e; }
.btn3.sig { color: #666; }
.tg { width: 18px; height: 9px; border-radius: 5px; background: #bdbdbd; position: relative; display: block; }
.tg::before { content: ""; position: absolute; left: 0; top: 0; width: 9px; height: 9px; border-radius: 50%; background: #f4f4f4; border: 1px solid #999; }
.tg.on { background: #8fb9e2; }
.tg.on::before { left: 9px; background: #1a6cc2; border-color: #1a6cc2; }
.cb { width: 8px; height: 8px; border: 1px solid #777; background: #fff; display: flex; align-items: center; justify-content: center; margin-top: 1px; }
.cb::before { content: ""; width: 4px; height: 4px; background: #333; }

.arrows { position: absolute; left: 0; top: 0; width: 1113px; height: 614px; pointer-events: none; }
```
